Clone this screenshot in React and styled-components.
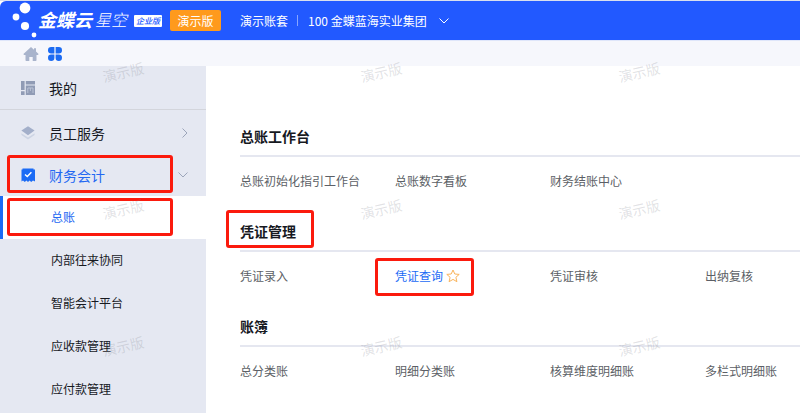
import React, { useState } from "react";
import styled, { createGlobalStyle, css } from "styled-components";

const MODULES = ["总账", "内部往来协同", "智能会计平台", "应收款管理", "应付款管理"];

const SECTIONS = [
  {
    title: "总账工作台",
    links: ["总账初始化指引工作台", "总账数字看板", "财务结账中心"],
  },
  {
    title: "凭证管理",
    marked: true,
    links: ["凭证录入", "凭证查询", "凭证审核", "出纳复核"],
  },
  {
    title: "账簿",
    links: ["总分类账", "明细分类账", "核算维度明细账", "多栏式明细账"],
  },
];

const FAVORITE = "凭证查询";
const WATERMARKS = Array.from({ length: 9 }, (_, i) => i);

export default function App() {
  const [active, setActive] = useState("总账");

  return (
    <Page>
      <GlobalStyle />
      <Header>
        <LogoDots />
        <Brand>
          <strong>金蝶云</strong>
          <span>星空</span>
        </Brand>
        <Edition>企业版</Edition>
        <DemoButton type="button">演示版</DemoButton>
        <Account>演示账套</Account>
        <Divider />
        <OrgButton type="button">
          100 金蝶蓝海实业集团
          <Chevron width="10" height="6" viewBox="0 0 10 6">
            <path d="M0.5 0.5 5 5 9.5 0.5" />
          </Chevron>
        </OrgButton>
      </Header>

      <TabBar>
        <IconButton type="button" aria-label="首页">
          <HomeIcon />
        </IconButton>
        <IconButton type="button" aria-label="应用">
          <AppsIcon />
        </IconButton>
      </TabBar>

      <Body>
        <Sidebar>
          <Mine type="button">
            <BoardIcon />
            我的
          </Mine>
          <Group>
            <MenuItem type="button">
              <LayersIcon />
              <span>员工服务</span>
              <Chevron width="6" height="10" viewBox="0 0 6 10">
                <path d="M0.5 0.5 5 5 0.5 9.5" />
              </Chevron>
            </MenuItem>
            <MenuItem type="button" $open>
              <FinanceIcon />
              <span>财务会计</span>
              <Chevron width="10" height="6" viewBox="0 0 10 6">
                <path d="M0.5 0.5 5 5 9.5 0.5" />
              </Chevron>
              <Mark $inset="1px 33px 3px 7px" />
            </MenuItem>
          </Group>
          {MODULES.map((name) => (
            <SubItem
              key={name}
              type="button"
              $active={active === name}
              onClick={() => setActive(name)}
            >
              {name}
              {name === "总账" && <Mark $inset="2px 33px 3px 4px" />}
            </SubItem>
          ))}
        </Sidebar>

        <Main>
          {SECTIONS.map(({ title, marked, links }) => (
            <section key={title}>
              <Title>
                <span>
                  {title}
                  {marked && <Mark $inset="-12px -18px -8px -14px" />}
                </span>
              </Title>
              <Links>
                {links.map((link) => (
                  <li key={link}>
                    <Link href="#" $favorite={link === FAVORITE}>
                      {link}
                      {link === FAVORITE && (
                        <>
                          <StarIcon />
                          <Mark $inset="-8px -14px -10px -20px" />
                        </>
                      )}
                    </Link>
                  </li>
                ))}
              </Links>
            </section>
          ))}
        </Main>
      </Body>

      <Watermarks aria-hidden="true">
        {WATERMARKS.map((i) => (
          <span key={i}>演示版</span>
        ))}
      </Watermarks>
    </Page>
  );
}

function LogoDots() {
  return (
    <svg width="26" height="39" viewBox="0 0 26 39" fill="#fff">
      <circle cx="13" cy="7" r="5.4" />
      <circle cx="4" cy="16" r="3.4" />
      <circle cx="13" cy="25" r="4.1" />
      <circle cx="22" cy="34" r="2.4" />
    </svg>
  );
}

function HomeIcon() {
  return (
    <svg width="16" height="14" viewBox="0 0 16 14" fill="#a9b4cc">
      <path d="M8 0 11 2.7V1.3h2v3.2L15.6 7 15 8h-1.5v5.2a.8.8 0 0 1-.8.8H9.7v-4H6.3v4H3.3a.8.8 0 0 1-.8-.8V8H1L.4 7Z" />
    </svg>
  );
}

function AppsIcon() {
  return (
    <svg width="14" height="14" viewBox="0 0 14 14" fill="#1c6bf2">
      <path d="M3.2 0h3.2v6.4H3.2a3.2 3.2 0 0 1 0-6.4Z" />
      <path d="M7.6 0h3.2a3.2 3.2 0 0 1 0 6.4H7.6Z" />
      <path d="M3.2 7.6h3.2v3.2a3.2 3.2 0 1 1-3.2-3.2Z" />
      <path d="M7.6 7.6h3.2a3.2 3.2 0 1 1-3.2 3.2Z" />
    </svg>
  );
}

function BoardIcon() {
  return (
    <svg width="14" height="14" viewBox="0 0 14 14" fill="#909bb5">
      <path d="M0 0h3.6v9H0ZM0 10.2h3.6V14H0ZM4.8 0H14v3.4H4.8ZM4.8 4.6H14V14H4.8Z" />
      <path d="M6.8 12V7H12V12M9.4 7v3" fill="none" stroke="#b9c2d5" />
    </svg>
  );
}

function LayersIcon() {
  return (
    <svg width="14" height="14" viewBox="0 0 14 14">
      <path d="M7 0.2 13.6 4.6 7 9.2 0.4 4.6Z" fill="#a3afca" />
      <path d="M0.4 7.2 7 11.6 13.6 7.2V9L7 13.6 0.4 9Z" fill="#cdd4e4" />
    </svg>
  );
}

function FinanceIcon() {
  return (
    <svg width="14" height="14" viewBox="0 0 14 14">
      <path d="M1.5 0.4h11v1H14V13.6l-2-1.2-1.8 1.5-1.6-1.5L7 13.9l-1.6-1.5-1.6 1.5L2 12.4 0.5 13.6V1.4h1Z" fill="#1b6bf5" />
      <path d="M4 6.4 6.3 8.6 10.4 4.2" fill="none" stroke="#fff" strokeWidth="1.4" />
    </svg>
  );
}

function StarIcon() {
  return (
    <svg width="14" height="14" viewBox="0 0 14 14" fill="none" stroke="#f9b45c" strokeLinejoin="round">
      <path d="M7 1 8.8 5 13.2 5.4 9.9 8.3 10.9 12.7 7 10.4 3.1 12.7 4.1 8.3 0.8 5.4 5.2 5Z" />
    </svg>
  );
}

const GlobalStyle = createGlobalStyle`
  * {
    box-sizing: border-box;
  }
  body {
    margin: 0;
    color: #17191f;
    background: #fff;
    font-family: "Noto Sans CJK SC", sans-serif;
    font-size: 12px;
    line-height: 20px;
  }
  button {
    padding: 0;
    border: 0;
    color: inherit;
    background: none;
    font: inherit;
    cursor: pointer;
  }
  svg {
    flex: none;
  }
`;

const Page = styled.div`
  position: relative;
  display: flex;
  flex-direction: column;
  height: 100vh;
  overflow: hidden;
  border-top: 1px solid #d9dfee;
`;

const Header = styled.header`
  display: flex;
  flex: none;
  align-items: center;
  height: 40px;
  padding-left: 12px;
  border-bottom: 1px solid #dfe6fa;
  border-top-left-radius: 6px;
  color: #fff;
  background: #2259ff;
  white-space: nowrap;
`;

const Brand = styled.div`
  display: flex;
  align-items: center;
  gap: 3px;
  padding-bottom: 4px;
  font-size: 18px;
  font-style: italic;

  span {
    font-size: 16px;
    font-weight: 300;
  }
`;

const Edition = styled.span`
  margin-left: 7px;
  padding: 0 2px;
  border-radius: 1px;
  color: #2259ff;
  background: #fff;
  font-size: 8px;
  font-style: italic;
  font-weight: 500;
  line-height: 12px;
`;

const DemoButton = styled.button`
  && {
    width: 51px;
    height: 21px;
    margin: 0 19px 0 8px;
    border-radius: 2px;
    background: #ff9a1c;
  }
`;

const Account = styled.span`
  line-height: 20px;
`;

const Divider = styled.span`
  width: 1px;
  height: 11px;
  margin: 0 10px 0 9px;
  background: #88a6ff;
`;

const OrgButton = styled.button`
  display: flex;
  align-items: center;
  gap: 12px;
`;

const Chevron = styled.svg`
  fill: none;
  stroke: currentColor;
`;

const TabBar = styled.nav`
  display: flex;
  flex: none;
  align-items: center;
  gap: 9px;
  height: 25px;
  padding-left: 23px;
  background: #f6f7fc;
`;

const IconButton = styled.button`
  display: flex;
`;

const Body = styled.div`
  display: flex;
  flex: 1;
  min-height: 0;
`;

const Sidebar = styled.aside`
  display: flex;
  flex: none;
  flex-direction: column;
  width: 206px;
  background: #e5e8f2;
`;

const MenuItem = styled.button`
  && {
    position: relative;
    display: flex;
    flex: none;
    align-items: center;
    gap: 14px;
    width: 100%;
    height: 42px;
    padding: 0 18px 0 21px;
    color: ${({ $open }) => ($open ? "#2468f2" : "inherit")};
    font-size: 14px;
  }

  span {
    flex: 1;
    text-align: left;
  }
  ${Chevron} {
    color: #9ca5ba;
  }
`;

const Mine = styled(MenuItem)`
  && {
    height: 44px;
    border-bottom: 1px solid #d3d5dc;
  }
`;

const Group = styled.div`
  flex: none;
  padding-top: 2px;
`;

const SubItem = styled.button`
  && {
    position: relative;
    flex: none;
    height: 43px;
    padding: 0 0 2px 48px;
    border-left: 3px solid transparent;
    text-align: left;
    ${({ $active }) =>
      $active &&
      css`
        color: #2468f2;
        border-color: #1b6bf5;
        background: #fff;
      `}
  }
`;

const Main = styled.main`
  flex: 1;
  min-width: 0;
  padding: 61px 0 0 34px;
  background: #fff;
`;

const Title = styled.h2`
  height: 30px;
  margin: 0;
  border-bottom: 2px solid #e5e7f0;
  font-size: 14px;
  font-weight: 700;
  line-height: 18px;

  span {
    position: relative;
    display: inline-block;
  }
`;

const Links = styled.ul`
  display: grid;
  grid-template-columns: repeat(4, minmax(155px, 1fr));
  height: 65px;
  margin: 0;
  padding: 14px 0 0;
  list-style: none;
`;

const Link = styled.a`
  position: relative;
  display: inline-flex;
  align-items: center;
  gap: 3px;
  color: ${({ $favorite }) => ($favorite ? "#1b6bf5" : "#5c5f66")};
  text-decoration: none;
  white-space: nowrap;
`;

// red frame around the steps to follow
const Mark = styled.i`
  && {
    position: absolute;
    inset: ${({ $inset }) => $inset};
    border: 3px solid #fb1a0d;
    border-radius: 3px;
    pointer-events: none;
  }
`;

const Watermarks = styled.div`
  position: absolute;
  top: 61px;
  left: 102px;
  display: grid;
  grid-template-columns: repeat(3, 258px);
  grid-auto-rows: 137px;
  color: rgba(120, 124, 135, 0.22);
  font-size: 14px;
  pointer-events: none;

  span {
    justify-self: start;
    align-self: start;
    transform: rotate(-13deg);
  }
`;
